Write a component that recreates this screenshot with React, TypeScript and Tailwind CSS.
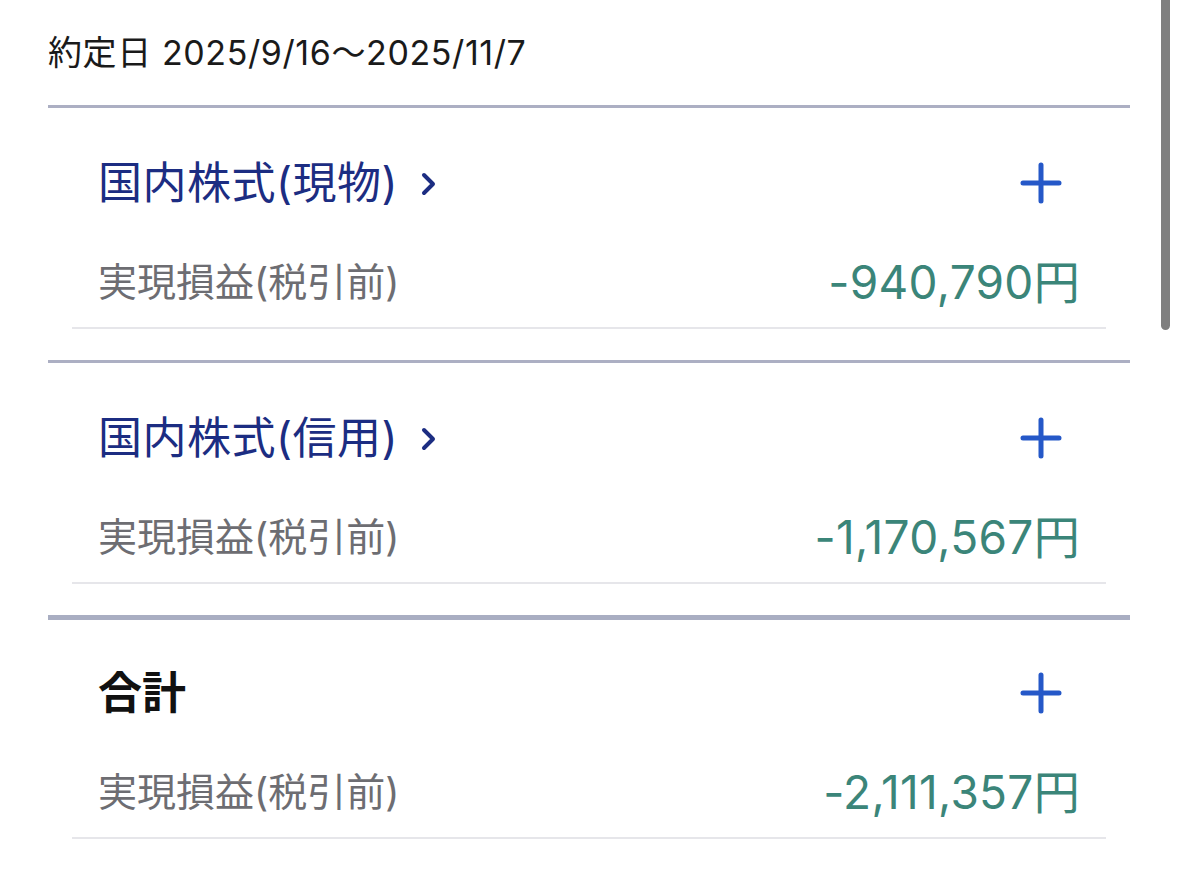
import React from 'react';

type Section = {
  title: string;
  link: boolean;
  value: string;
};

const sections: Section[] = [
  { title: '国内株式(現物)', link: true, value: '-940,790円' },
  { title: '国内株式(信用)', link: true, value: '-1,170,567円' },
  { title: '合計', link: false, value: '-2,111,357円' },
];

function PlusIcon() {
  return (
    <svg width="42" height="42" viewBox="0 0 42 42" className="mr-[68px]">
      <path d="M21 3v36M3 21h36" stroke="#2558c8" strokeWidth="5" strokeLinecap="round" fill="none" />
    </svg>
  );
}

function Chevron() {
  return (
    <svg width="18" height="24" viewBox="0 0 18 24" className="ml-[22px] mt-[2px]">
      <path d="M4 3l9 9-9 9" stroke="#1c2d82" strokeWidth="4" strokeLinecap="round" strokeLinejoin="round" fill="none" />
    </svg>
  );
}

export default function App() {
  return (
    <div
      className="relative w-[1179px] h-[869px] bg-white overflow-hidden"
      style={{ fontFamily: 'Inter, "Noto Sans CJK JP", sans-serif' }}
    >
      <div className="pl-12 pr-[49px]">
        <div className="h-[105px] flex items-center text-[34px] text-[#1a1a1a] tracking-[0.6px]">
          約定日 2025/9/16〜2025/11/7
        </div>

        {sections.map((s, i) => (
          <div key={i}>
            <div className={i === 2 ? 'h-[5px] bg-[#a9aec2]' : 'h-[3px] bg-[#acafc3]'} />
            <div className={i === 2 ? 'pt-[43px] pl-[50px]' : 'pt-[45px] pl-[50px]'}>
              <div className="flex items-center justify-between h-[60px]">
                {s.link ? (
                  <div className="flex items-center text-[44px] text-[#1c2d82] tracking-[0.5px]">
                    <span>{s.title}</span>
                    <Chevron />
                  </div>
                ) : (
                  <div className="text-[44px] font-bold text-[#111]">{s.title}</div>
                )}
                <PlusIcon />
              </div>
            </div>
            <div className="pl-[50px] pr-[50px] h-[60px] mt-[39px] flex items-center justify-between">
              <span className="text-[39px] text-[#6d6d72]">実現損益(税引前)</span>
              <span className="text-[46px] text-[#3b8579] tracking-[0.3px]">{s.value}</span>
            </div>
            <div className="mt-[15px] mx-6 h-[2px] bg-[#e6e6ea]" />
            <div className="h-[31px]" />
          </div>
        ))}
      </div>

      <div className="absolute right-[9px] top-0 w-[9px] h-[330px] rounded-b-full bg-[#7f7f7f]" />
    </div>
  );
}
